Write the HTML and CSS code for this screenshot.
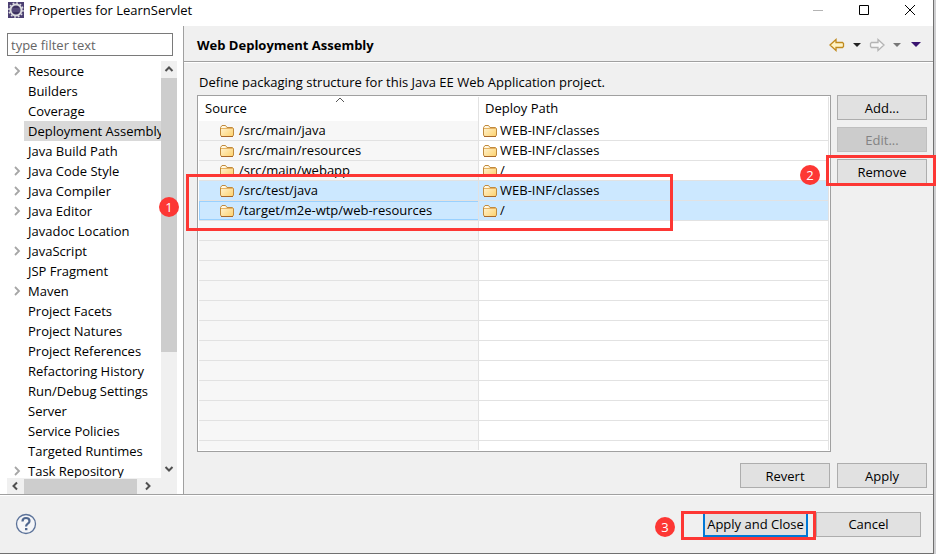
FILE: index.html
```
<!DOCTYPE html>
<html lang="en">
<head>
<meta charset="utf-8">
<title>Properties for LearnServlet</title>
<link rel="stylesheet" href="styles.css">
</head>
<body>
<svg class="defs" aria-hidden="true">
  <defs>
    <linearGradient id="fold" x1="0" y1="0" x2="1" y2="1"><stop offset="0" stop-color="#fff7dc"/><stop offset="1" stop-color="#fdd06a"/></linearGradient>
    <symbol id="folder" viewBox="0 0 14 12">
      <path d="M.5 10V2.500L2 .5h3.500L7 2.500h5.500l1 1V10l-1 1.500H1.500z" fill="url(#fold)" stroke="#c08a3e"/>
      <path d="M1 3.500h12" stroke="#e5b263"/>
      <path d="M2 2h3.500" stroke="#fff"/>
      <path d="M1 11.500h12" stroke="#a9682a"/>
    </symbol>
    <symbol id="chev" viewBox="0 0 8 10"><path d="M2 1l4 4-4 4" fill="none" stroke="#a6a6a6" stroke-width="1.800"/></symbol>
    <symbol id="arrow" viewBox="0 0 16 14"><path d="M1 7l6-5.500v3h6.500l1 1v3l-1 1H7v3z" stroke-width="1.300"/></symbol>
    <symbol id="tri" viewBox="0 0 8 4"><path d="M0 0h8L4 4z"/></symbol>
    <symbol id="scroll" viewBox="0 0 10 10"><path d="M1.500 7L5 3.500 8.500 7" fill="none" stroke="#505050" stroke-width="2"/></symbol>
  </defs>
</svg>
<div class="window">
  <header class="titlebar">
    <svg class="logo" viewBox="0 0 16 16"><path d="M0 0h16v16H0z" fill="#4b3f72"/><circle cx="8" cy="8" r="5.500" fill="#3c315f" stroke="#dcdce0" stroke-width="2"/><circle cx="8" cy="8" r="7" fill="none" stroke="#dcdce0" stroke-width="1.500" stroke-dasharray="1.800 1.860"/><path d="M4 7h8M4 9h8" stroke="#6c6290"/></svg>
    <h1>Properties for LearnServlet</h1>
    <div class="caption">
      <button aria-label="Minimize"><svg viewBox="0 0 12 12"><path d="M1 6.500h10" stroke="#b4b4b4"/></svg></button>
      <button aria-label="Maximize"><svg viewBox="0 0 12 12"><path d="M1.500 1.500h9v9h-9z" fill="none" stroke="#000"/></svg></button>
      <button aria-label="Close"><svg viewBox="0 0 12 12"><path d="M1 1l10 10M11 1L1 11" stroke="#000"/></svg></button>
    </div>
  </header>
  <div class="body">
    <nav class="side">
      <input class="filter" type="text" placeholder="type filter text" aria-label="Filter">
      <div class="tree">
        <ul>
          <li><svg><use href="#chev"/></svg><span>Resource</span></li>
          <li><span>Builders</span></li>
          <li><span>Coverage</span></li>
          <li><span class="current">Deployment Assembly</span></li>
          <li><span>Java Build Path</span></li>
          <li><svg><use href="#chev"/></svg><span>Java Code Style</span></li>
          <li><svg><use href="#chev"/></svg><span>Java Compiler</span></li>
          <li><svg><use href="#chev"/></svg><span>Java Editor</span></li>
          <li><span>Javadoc Location</span></li>
          <li><svg><use href="#chev"/></svg><span>JavaScript</span></li>
          <li><span>JSP Fragment</span></li>
          <li><svg><use href="#chev"/></svg><span>Maven</span></li>
          <li><span>Project Facets</span></li>
          <li><span>Project Natures</span></li>
          <li><span>Project References</span></li>
          <li><span>Refactoring History</span></li>
          <li><span>Run/Debug Settings</span></li>
          <li><span>Server</span></li>
          <li><span>Service Policies</span></li>
          <li><span>Targeted Runtimes</span></li>
          <li><svg><use href="#chev"/></svg><span>Task Repository</span></li>
        </ul>
        <div class="vbar"><svg><use href="#scroll"/></svg><div class="vtrack"><i></i></div><svg class="down"><use href="#scroll"/></svg></div>
        <div class="hbar"><svg class="left"><use href="#scroll"/></svg><div class="htrack"><i></i></div><svg class="right"><use href="#scroll"/></svg></div>
      </div>
    </nav>
    <main class="page">
      <div class="pagehead">
        <h2>Web Deployment Assembly</h2>
        <div class="history">
          <button aria-label="Back"><svg class="arrow back"><use href="#arrow"/></svg></button>
          <button aria-label="Back history"><svg class="tri dark"><use href="#tri"/></svg></button>
          <button aria-label="Forward"><svg class="arrow forward"><use href="#arrow"/></svg></button>
          <button aria-label="Forward history"><svg class="tri grey"><use href="#tri"/></svg></button>
          <button aria-label="Menu"><svg class="tri menu"><use href="#tri"/></svg></button>
        </div>
      </div>
      <div class="content">
        <p>Define packaging structure for this Java EE Web Application project.</p>
        <div class="work">
          <div class="grid">
            <table>
              <thead><tr><th class="src">Source<svg class="sort" viewBox="0 0 10 6"><path d="M1 5l4-4 4 4" fill="none" stroke="#555"/></svg></th><th>Deploy Path</th></tr></thead>
              <tbody>
                <tr><td><svg><use href="#folder"/></svg>/src/main/java</td><td><svg><use href="#folder"/></svg>WEB-INF/classes</td></tr>
                <tr><td><svg><use href="#folder"/></svg>/src/main/resources</td><td><svg><use href="#folder"/></svg>WEB-INF/classes</td></tr>
                <tr><td><svg><use href="#folder"/></svg>/src/main/webapp</td><td><svg><use href="#folder"/></svg>/</td></tr>
                <tr class="sel"><td><svg><use href="#folder"/></svg>/src/test/java</td><td><svg><use href="#folder"/></svg>WEB-INF/classes</td></tr>
                <tr class="sel focus"><td><svg><use href="#folder"/></svg>/target/m2e-wtp/web-resources</td><td><svg><use href="#folder"/></svg>/</td></tr>
                <tr><td></td><td></td></tr><tr><td></td><td></td></tr><tr><td></td><td></td></tr><tr><td></td><td></td></tr><tr><td></td><td></td></tr><tr><td></td><td></td></tr>
                <tr><td></td><td></td></tr><tr><td></td><td></td></tr><tr><td></td><td></td></tr><tr><td></td><td></td></tr><tr><td></td><td></td></tr>
                <tr class="tail"><td></td><td></td></tr>
              </tbody>
            </table>
            <div class="mark rows"><b>1</b></div>
          </div>
          <div class="actions">
            <button class="btn">Add...</button>
            <button class="btn" disabled>Edit...</button>
            <div class="holder"><button class="btn">Remove</button><div class="mark remove"><b>2</b></div></div>
          </div>
        </div>
        <div class="pagefoot"><button class="btn">Revert</button><button class="btn">Apply</button></div>
      </div>
    </main>
  </div>
  <footer class="foot">
    <button class="help" aria-label="Help"><svg viewBox="0 0 22 22"><circle cx="11" cy="11" r="9.500" fill="#f4f5f8" stroke="#5b7299" stroke-width="1.300"/><path d="M7.500 8.500q0-3.500 3.500-3.500t3.500 3q0 1.500-1.700 2.700T11 13.500" fill="none" stroke="#4f678f" stroke-width="2.200"/><path d="M10 15h2.400v2.200H10z" fill="#4f678f"/></svg></button>
    <div class="holder"><button class="btn primary">Apply and Close</button><div class="mark apply"><b>3</b></div></div>
    <button class="btn">Cancel</button>
  </footer>
</div>
<div class="behind"></div>
</body>
</html>
```
FILE: styles.css
```
* { box-sizing: border-box; }
body { margin: 0; height: 100vh; display: flex; overflow: hidden; background: #f0f0f0; color: #000; font: 13px/20px "Open Sans", sans-serif; }
button, input { font: inherit; color: inherit; }
h1, h2, p, ul { margin: 0; padding: 0; font-size: 13px; }
h1 { font-weight: 400; }
svg { display: block; flex: none; }
.defs { position: absolute; width: 0; height: 0; }
.window { flex: 1; min-width: 0; display: flex; flex-direction: column; border-right: 1px solid #707070; border-bottom: 1px solid #707070; background: #f0f0f0; }
.behind { width: 2px; background: #cfcfd1; }

.titlebar { display: flex; align-items: center; height: 26px; padding: 0 0 6px 8px; background: #fff; }
.logo { width: 16px; height: 16px; margin-right: 5px; }
.caption { display: flex; margin-left: auto; }
.caption button { width: 46px; height: 20px; padding: 0; border: 0; background: none; display: flex; align-items: center; justify-content: center; }
.caption svg { width: 12px; height: 12px; }

.body { flex: 1; min-height: 0; display: flex; border-bottom: 1px solid #a0a0a0; }
.side { width: 184px; flex: none; padding: 7px 10px 0 7px; background: #fff; border-right: 1px solid #a0a0a0; display: flex; flex-direction: column; }
.filter { width: 100%; height: 23px; flex: none; padding: 0 3px; border: 1px solid #7a7a7a; background: #fff; }
.filter::placeholder { color: #666; opacity: 1; }
.tree { flex: 1; min-height: 0; margin: 5px -4px 0 0; display: grid; grid-template: minmax(0, 1fr) 16px / minmax(0, 1fr) 16px; background: #fff; }
.tree ul { list-style: none; overflow: hidden; }
.tree li { display: grid; grid-template-columns: 17px max-content; height: 20px; align-items: center; }
.tree li svg { width: 8px; height: 10px; margin-left: 6px; }
.tree li span { grid-column: 2; padding: 0 0 0 4px; height: 20px; }
.current { background: #d9d9d9; }
.vbar { display: flex; flex-direction: column; align-items: center; background: #f0f0f0; padding: 3px 0 20px; grid-row: 1 / 3; grid-column: 2; }
.tree .vbar svg, .tree .hbar svg { width: 10px; height: 10px; }
.vtrack { flex: 1; width: 100%; padding-top: 4px; }
.vtrack i { display: block; height: 71%; background: #cdcdcd; }
.down { transform: rotate(180deg); }
.hbar { grid-column: 1; grid-row: 2; display: flex; align-items: center; background: #f0f0f0; padding: 0 8px 0 3px; }
.htrack { flex: 1; height: 15px; padding: 0 6px 0 4px; }
.htrack i { display: block; height: 15px; background: #cdcdcd; }
.left { transform: rotate(-90deg); }
.right { transform: rotate(90deg); }

.page { flex: 1; min-width: 0; display: flex; flex-direction: column; }
.pagehead { display: flex; align-items: center; height: 36px; padding: 2px 12px 0 13px; border-bottom: 1px solid #a0a0a0; box-shadow: 0 1px #fff; }
.history { display: flex; align-items: center; gap: 8px; margin-left: auto; }
.history button { padding: 0; border: 0; background: none; }
.history button:last-child { margin-left: 2px; }
.arrow { width: 16px; height: 14px; }
.tri { width: 8px; height: 4px; }
.back { fill: #fff3c4; stroke: #c08a1e; }
.forward { fill: #f6f6f6; stroke: #b4b4b4; transform: scaleX(-1); }
.dark { fill: #222; }
.grey { fill: #777; }
.menu { width: 10px; height: 5px; fill: #3a1570; }

.content { flex: 1; display: flex; flex-direction: column; padding: 10px 6px 6px 13px; }
.content p { padding-left: 2px; height: 23px; }
.work { flex: 1; display: flex; gap: 6px; }
.grid { position: relative; flex: 1; background: #fff; border: 1px solid #a0a0a0; padding: 1px; }
table { width: 100%; border-collapse: separate; border-spacing: 0; table-layout: fixed; }
th { position: relative; height: 24px; padding: 0 6px 2px; text-align: left; font-weight: 400; border-right: 1px solid #e2e2e2; }
.src { width: 280px; }
.sort { position: absolute; left: 136px; top: 0; width: 10px; height: 6px; }
td { height: 20px; padding: 0 0 0 4px; line-height: 19px; border-right: 1px solid #e2e2e2; border-bottom: 1px solid #e2e2e2; white-space: nowrap; }
td:first-child { padding-left: 21px; background: #f7f7f7; }
td svg { display: inline-block; width: 14px; height: 12px; margin-right: 5px; vertical-align: -2px; }
td:last-child svg { margin-right: 3px; }
.tail td { height: 9px; border-bottom: 0; }
.sel td, .sel td:first-child { background: #cce8ff; }
.focus td:first-child { box-shadow: inset 1px 1px #99d1ff, inset 0 -1px #99d1ff; }
.actions { display: flex; flex-direction: column; gap: 7px; }
.btn { width: 90px; height: 25px; padding: 0; border: 1px solid #adadad; background: #e1e1e1; }
.btn:disabled { background: #ccc; border-color: #bfbfbf; color: #838383; }
.holder { position: relative; display: flex; }
.pagefoot { display: flex; justify-content: flex-end; gap: 7px; margin-top: 11px; }

.foot { display: flex; align-items: center; height: 58px; padding: 0 12px 0 15px; box-shadow: inset 0 1px #fff; }
.foot .btn { width: 105px; }
.foot .primary { border: 2px solid #0078d7; }
.foot .holder { margin: 0 8px 0 auto; }
.help { padding: 0; border: 0; background: none; }
.help svg { width: 22px; height: 22px; }

.mark { position: absolute; border: 3px solid #fd3734; pointer-events: none; }
.mark b { position: absolute; width: 20px; height: 20px; border-radius: 50%; background: #fd3734; color: #fff; font-weight: 400; text-align: center; }
.rows { left: -12px; top: 78px; width: 487px; height: 57px; }
.rows b { left: -30px; top: 20px; }
.remove { left: -11px; top: -4px; width: 110px; height: 31px; }
.remove b { left: -29px; top: 7px; }
.apply { left: -22px; top: -1px; width: 135px; height: 29px; }
.apply b { left: -29px; top: 3px; }
```
